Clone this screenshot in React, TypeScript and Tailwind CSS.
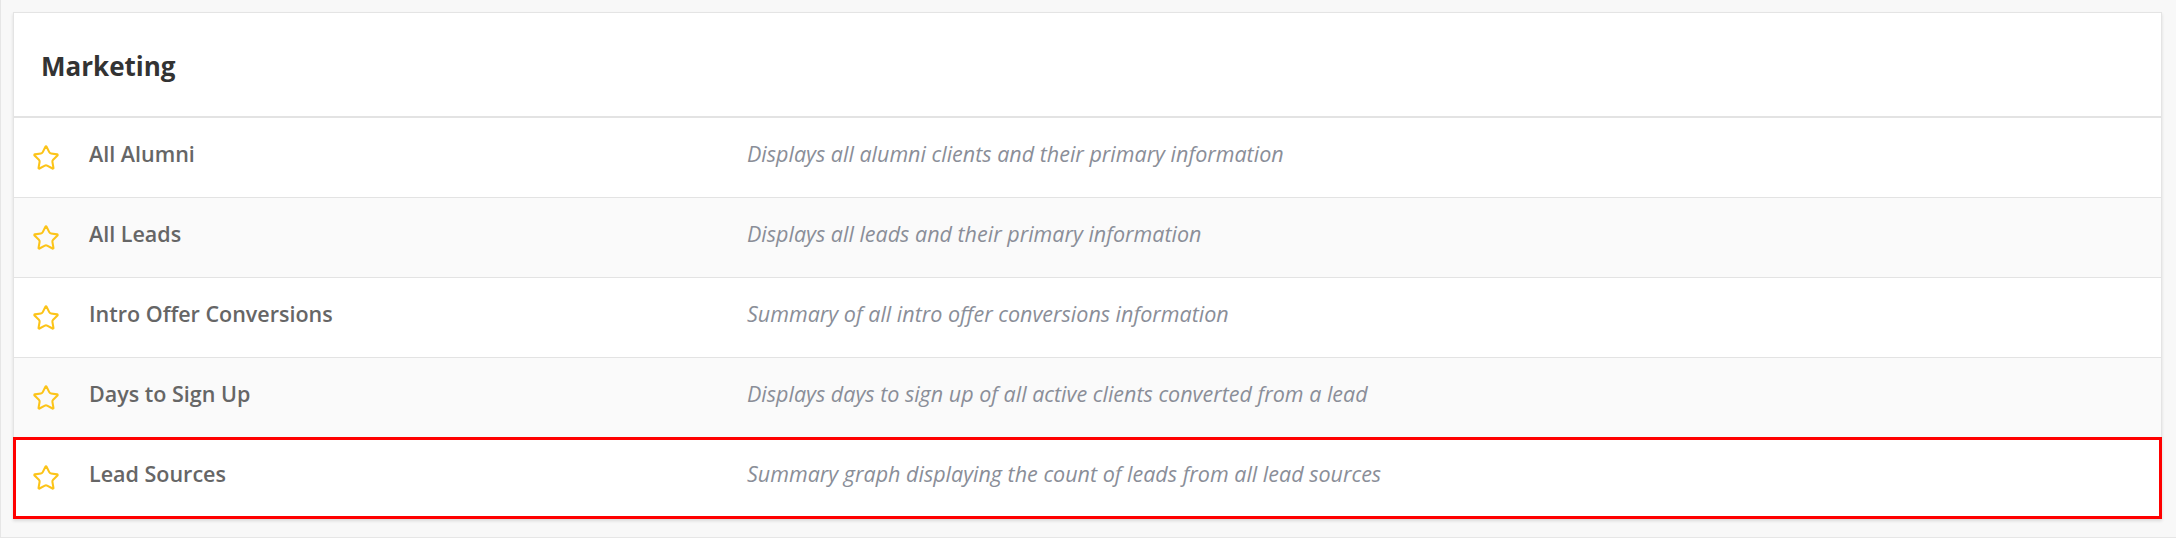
import { Star } from 'lucide-react';

interface Report {
  name: string;
  description: string;
}

const reports: Report[] = [
  { name: 'All Alumni', description: 'Displays all alumni clients and their primary information' },
  { name: 'All Leads', description: 'Displays all leads and their primary information' },
  { name: 'Intro Offer Conversions', description: 'Summary of all intro offer conversions information' },
  { name: 'Days to Sign Up', description: 'Displays days to sign up of all active clients converted from a lead' },
  { name: 'Lead Sources', description: 'Summary graph displaying the count of leads from all lead sources' },
];

const ReportRow = ({ report, index, highlighted }: { report: Report; index: number; highlighted: boolean }) => {
  const striped = index % 2 === 1;
  return (
    <div
      className={`flex h-[80px] items-center ${striped ? 'bg-[#fafafa]' : 'bg-white'} ${
        highlighted ? 'relative outline-[3px] outline-solid outline-[#ff0000] -outline-offset-2' : 'border-b border-[#e3e3e3]'
      }`}
    >
      <div className="flex w-[75px] shrink-0 justify-start pl-[18px]">
        <Star className="h-[28px] w-[28px] text-[#fcc419]" strokeWidth={1.8} />
      </div>
      <div className="w-[658px] shrink-0 pb-[7px] text-[21.5px] font-semibold text-[#666666]">{report.name}</div>
      <div className="pb-[7px] text-[21.5px] italic text-[#8a8e98]">{report.description}</div>
    </div>
  );
};

export default function App() {
  return (
    <div
      className="h-[538px] w-full border-b border-l border-[#e6e6e6] bg-[#f8f8f8] pl-3 pr-[14px] pt-3"
      style={{ fontFamily: '"Open Sans", "Noto Sans", sans-serif' }}
    >
      <div className="border border-[#e4e4e4] bg-white shadow-[0_2px_3px_rgba(0,0,0,0.12)]">
        <div className="flex h-[105px] items-center border-b-2 border-[#e3e3e3] pl-[27px] pt-1">
          <h2 className="text-[26px] font-bold text-[#333333]">Marketing</h2>
        </div>
        {reports.map((report, i) => (
          <ReportRow key={report.name} report={report} index={i} highlighted={i === reports.length - 1} />
        ))}
      </div>
    </div>
  );
}
